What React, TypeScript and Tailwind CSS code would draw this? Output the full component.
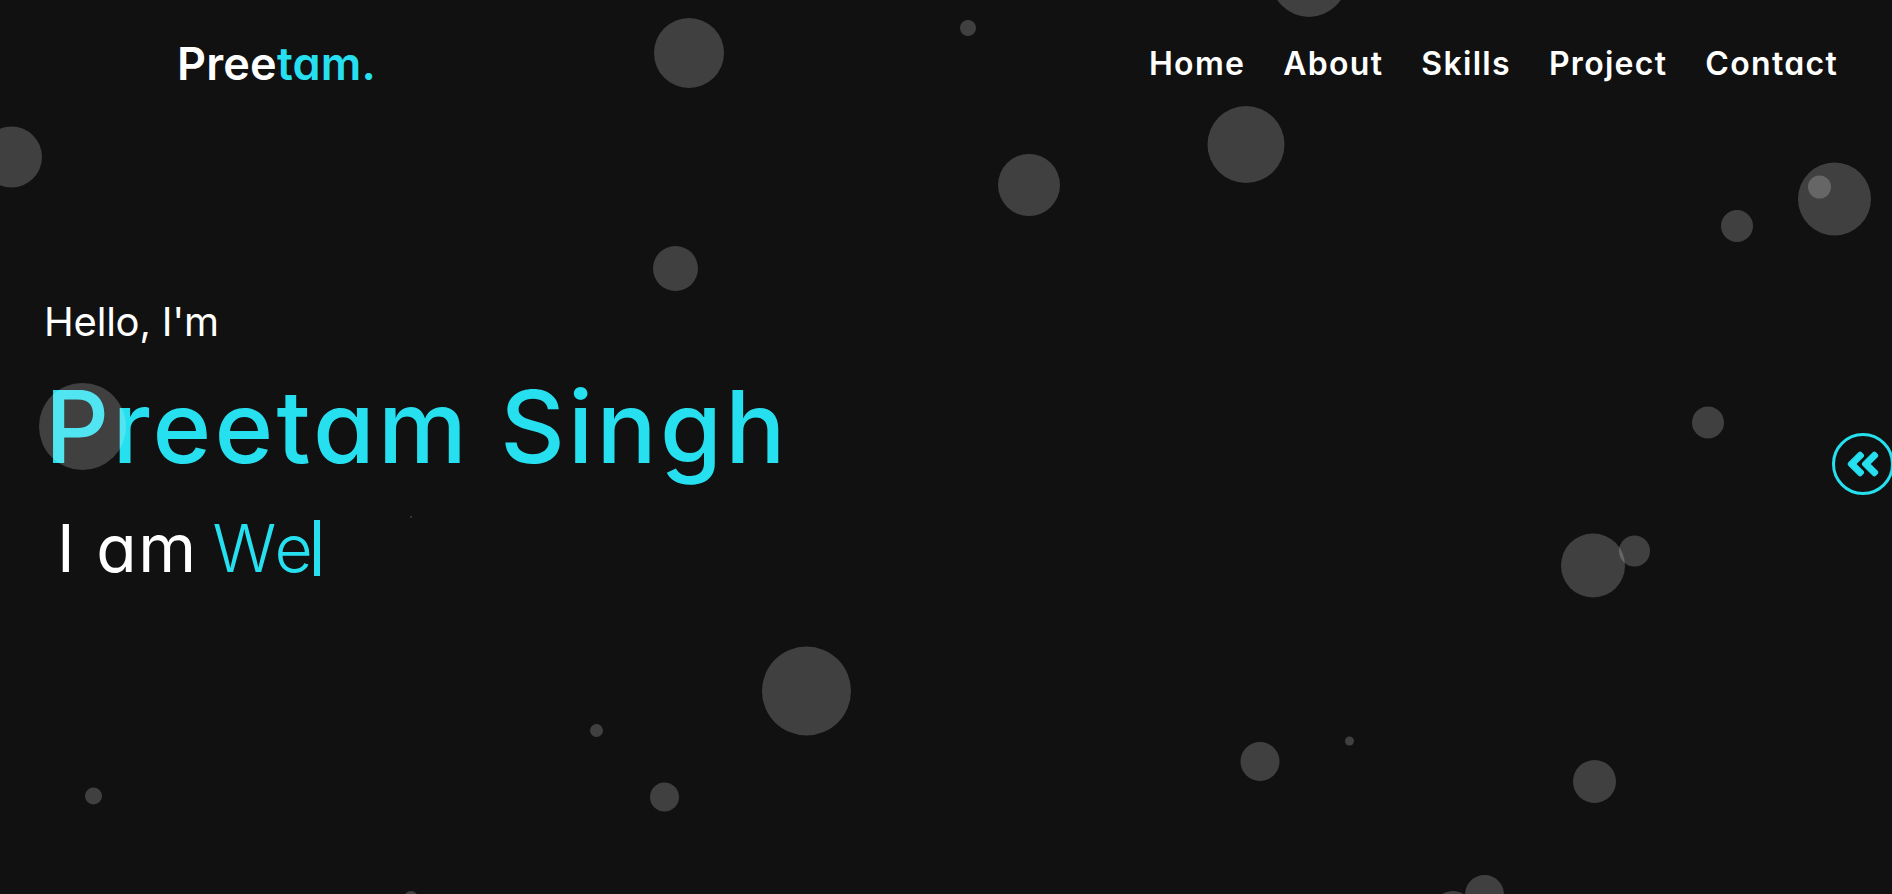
import { FaAngleDoubleLeft } from "react-icons/fa";

const particles: [number, number, number][] = [
  [689, 53, 70],
  [11.5, 157, 61],
  [675.5, 268.5, 45],
  [968, 28, 16],
  [1309, -21, 76],
  [1246, 144.5, 77],
  [1029, 185, 62],
  [1834.5, 199, 73],
  [1819.5, 187, 23],
  [1737, 226, 32],
  [82.5, 426.5, 87],
  [1708, 422.5, 32],
  [1593, 565.5, 64],
  [1634.5, 551, 31],
  [806.5, 691, 89],
  [596.5, 730.5, 13],
  [93.5, 796, 17],
  [664.5, 797, 29],
  [411, 898, 14],
  [1260, 761.5, 39],
  [1349.5, 741, 9],
  [1594.5, 781.5, 43],
  [1484.5, 894.5, 39],
  [1453, 911, 40],
  [411, 517, 2],
];

const navLinks = ["Home", "About", "Skills", "Project", "Contact"];

const App = () => {
  return (
    <div className="relative h-[894px] overflow-hidden bg-[#111111] text-white font-['Inter',sans-serif] [font-feature-settings:'cv11']">
      {/* Navbar */}
      <nav className="flex items-center justify-between pl-[177px] pr-[54px] pt-[36px]">
        <a className="text-[45px] leading-[56px] font-semibold tracking-[0.2px]">
          Pree<span className="text-[#26dfef]">tam.</span>
        </a>
        <ul className="flex gap-[38px] text-[32px] leading-[56px] font-semibold tracking-[1.3px]">
          {navLinks.map((link) => (
            <li key={link}>{link}</li>
          ))}
        </ul>
      </nav>

      {/* Hero */}
      <main className="flex flex-col items-start pl-[45px] pt-[202px]">
        <h3 className="-ml-px text-[40px] leading-[56px] tracking-[-0.2px]">Hello, I'm</h3>
        <h1 className="mt-[17px] text-[100px] leading-[120px] font-medium tracking-[3.3px] text-[#26dfef]">Preetam Singh</h1>
        <h2 className="mt-[23px] ml-[12px] flex items-center text-[66px] leading-[76px] tracking-[1.5px]">
          I am&nbsp;<span className="-ml-[5px] font-light text-[#26dfef] border-r-[6px] border-[#26dfef] leading-[56px]">We</span>
        </h2>
      </main>

      {/* Sidebar toggle */}
      <button className="absolute left-[1832px] top-[433px] flex h-[62px] w-[62px] items-center justify-center rounded-full border-[3px] border-[#26dfef] text-[#26dfef]">
        <FaAngleDoubleLeft className="text-[38px]" stroke="currentColor" strokeWidth={14} />
      </button>

      {/* Particles */}
      <svg className="pointer-events-none absolute inset-0" width="1892" height="894">
        {particles.map(([cx, cy, d], i) => (
          <circle key={i} cx={cx} cy={cy} r={d / 2} fill="#ffffff" fillOpacity={0.2} />
        ))}
      </svg>
    </div>
  );
};

export default App;
